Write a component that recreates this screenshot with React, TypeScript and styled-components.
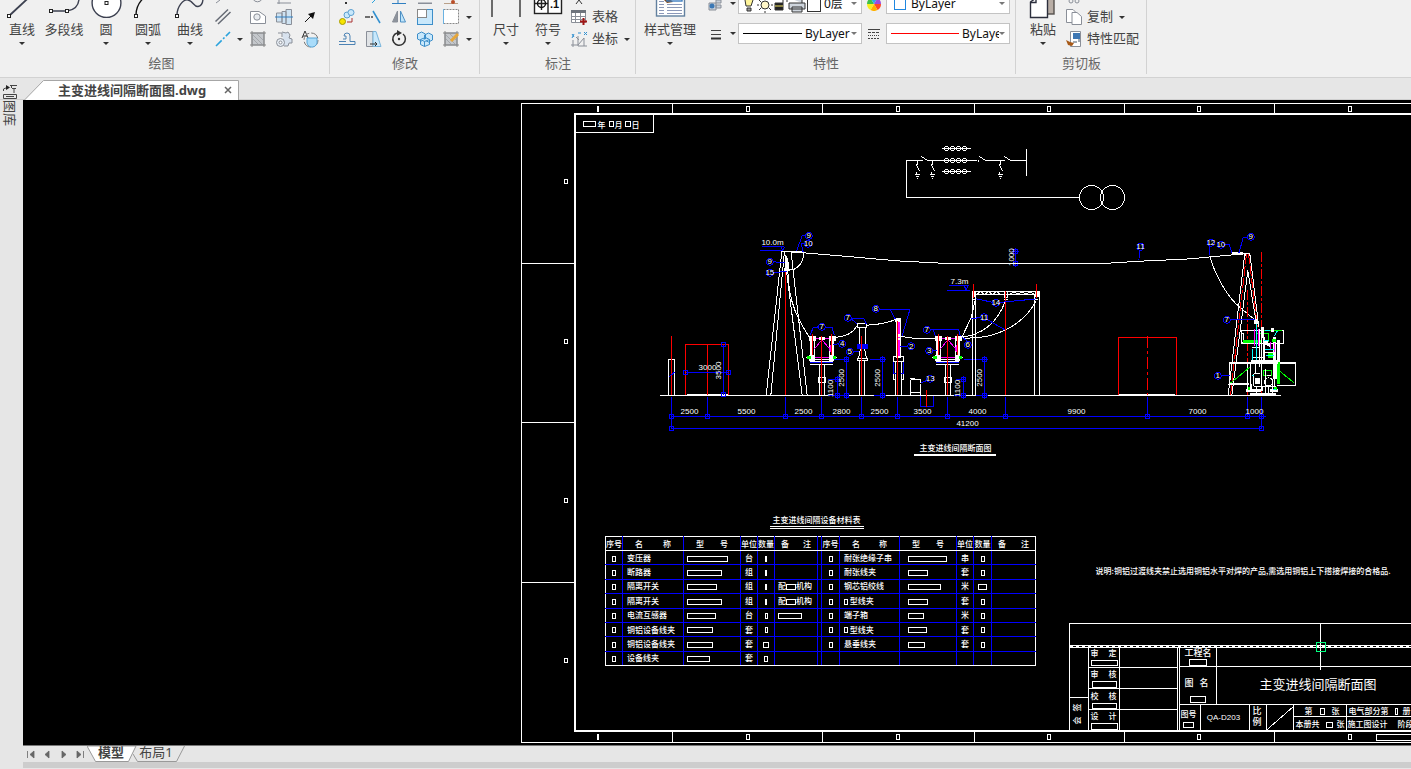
import React from 'react';
import styled, { createGlobalStyle, css } from 'styled-components';

const GlobalStyle = createGlobalStyle`
  * { box-sizing: border-box; }
  html, body { margin: 0; padding: 0; }
  body {
    background: #e6e6e6;
    font-family: "Noto Sans", "Noto Sans CJK SC", sans-serif;
    font-size: 13px;
    color: #444;
    overflow: hidden;
  }
  button, select { font: inherit; color: inherit; }
`;

/* ---------- shell ---------- */

const Shell = styled.div`
  display: flex;
  flex-direction: column;
  height: 100vh;
`;

const Ribbon = styled.header`
  display: flex;
  flex: none;
  height: 78px;
  overflow: hidden;
  background: #f0f0f0;
  border-bottom: 1px solid #d2d2d2;
`;

const Group = styled.section<{ $w: number }>`
  position: relative;
  display: flex;
  flex: none;
  flex-direction: column;
  width: ${(p) => p.$w}px;
  &::after {
    content: '';
    position: absolute;
    top: 0;
    right: 0;
    width: 1px;
    height: 74px;
    background: #d2d2d2;
  }
`;

const GroupBody = styled.div<{ $pad: number }>`
  display: flex;
  align-items: flex-end;
  height: 50px;
  padding-left: ${(p) => p.$pad}px;
`;

const GroupTitle = styled.h2<{ $inset?: number }>`
  margin: 0;
  padding-right: ${(p) => p.$inset ?? 0}px;
  font-size: 13px;
  font-weight: 400;
  line-height: 27px;
  text-align: center;
  color: #666;
`;

const BigButton = styled.button<{ $w?: number }>`
  display: flex;
  flex: none;
  flex-direction: column;
  align-items: center;
  width: ${(p) => p.$w ?? 42}px;
  height: 62px;
  padding: 0;
  border: 0;
  background: none;
  line-height: 18px;
  white-space: nowrap;
  svg { flex: none; display: block; }
`;

const Caret = styled.span<{ $soft?: boolean }>`
  display: block;
  flex: none;
  width: 0;
  height: 0;
  border: 3px solid transparent;
  border-bottom: 0;
  border-top-color: ${(p) => (p.$soft ? '#777' : '#333')};
`;

const BigCaret = styled(Caret)`
  margin-top: 4px;
`;

const IconGrid = styled.div<{ $cols: string }>`
  display: grid;
  grid-template-columns: ${(p) => p.$cols};
  grid-auto-rows: 22px;
`;

const IconButton = styled.button`
  display: flex;
  align-items: center;
  justify-content: center;
  padding: 0;
  border: 0;
  background: none;
  svg { flex: none; }
`;

const CommandList = styled.div`
  display: flex;
  flex-direction: column;
`;

const Command = styled.button`
  display: flex;
  align-items: center;
  gap: 3px;
  height: 22px;
  padding: 0;
  border: 0;
  background: none;
  line-height: 18px;
  white-space: nowrap;
  svg { flex: none; width: 20px; }
  ${Caret} { margin-left: 3px; }
`;

const CommandLabel = styled.span`
  padding-bottom: 3px;
`;

const PropertyGrid = styled.div`
  display: grid;
  grid-template-columns: 24px 10px 124px 24px 124px;
  grid-auto-rows: 21px;
  row-gap: 9px;
  align-items: center;
  padding-bottom: 6px;
  margin-left: 4px;
`;

const Combo = styled.label`
  display: flex;
  align-items: center;
  height: 21px;
  padding: 0 4px;
  border: 1px solid #c3c3c3;
  background: #fff;
  svg { flex: none; }
`;

const ComboSelect = styled.select`
  flex: 1;
  min-width: 0;
  margin: 0 0 0 3px;
  padding: 0;
  border: 0;
  outline: 0;
  background: none;
  appearance: none;
  color: #111;
  font-size: 12px;
`;

/* ---------- document tabs ---------- */

const DocBar = styled.nav`
  display: flex;
  flex: none;
  align-items: flex-end;
  height: 22px;
  padding-left: 24px;
  border-bottom: 1px solid #cfcfcf;
  background: #e6e6e6;
`;

const DocTab = styled.div`
  display: flex;
  align-items: center;
  position: relative;
  z-index: 1;
  width: 215px;
  height: 20px;
  margin-bottom: -1px;
  padding-left: 34px;
  gap: 12px;
  & > svg { position: absolute; inset: 0; z-index: -1; }
`;

const DocName = styled.span`
  font-size: 13px;
  font-weight: 700;
  line-height: 18px;
  white-space: nowrap;
  width: 154px;
`;

const CloseButton = styled.button`
  display: flex;
  padding: 0;
  border: 0;
  background: none;
`;

/* ---------- workspace ---------- */

const Workspace = styled.div`
  display: flex;
  flex: 1;
  min-height: 0;
`;

const Sidebar = styled.aside`
  flex: none;
  width: 23px;
  background: #e6e6e6;
`;

const SideButton = styled.button`
  display: flex;
  flex-direction: column;
  align-items: center;
  width: 20px;
  margin-top: -16px;
  padding: 0;
  border: 0;
  background: none;
  line-height: 14px;
  span { writing-mode: vertical-rl; text-orientation: sideways; }
`;

const Main = styled.main`
  display: flex;
  flex: 1;
  flex-direction: column;
  min-width: 0;
`;

const Canvas = styled.div`
  position: relative;
  flex: 1;
  min-height: 0;
  overflow: hidden;
  background: #000;
`;

const Sheet = styled.svg`
  display: block;
  width: 100%;
  height: 100%;
  shape-rendering: crispEdges;
  fill: none;
  stroke: #fff;
  path, rect, circle { vector-effect: non-scaling-stroke; }
`;

const cadText = css`
  font-family: "Noto Sans CJK SC", sans-serif;
  font-weight: 500;
`;

const Han = styled.text<{ $size?: number; $light?: boolean }>`
  ${cadText}
  font-size: ${(p) => p.$size ?? 8}px;
  font-weight: ${(p) => (p.$light ? 400 : 500)};
  dominant-baseline: central;
  fill: #fff;
  stroke: none;
`;

const Num = styled.text<{ $size?: number }>`
  font-family: "Liberation Sans", sans-serif;
  font-size: ${(p) => p.$size ?? 8}px;
  dominant-baseline: central;
  text-anchor: middle;
  fill: #fff;
  stroke: none;
`;

const Schedule = styled.table`
  position: absolute;
  left: 582px;
  top: 414px;
  width: 430px;
  height: 130px;
  table-layout: fixed;
  border-collapse: collapse;
  color: #fff;
  ${cadText}
  font-size: 8px;
  line-height: 12px;
`;

const ScheduleTitle = styled.caption`
  height: 22px;
  padding-right: 8px;
  span {
    display: inline-block;
    padding: 0 3px;
    border-bottom: 3px double #fff;
    line-height: 12px;
  }
`;

const Cell = styled.td<{ $align?: string; $pad?: number }>`
  height: 14px;
  padding: 0 0 0 ${(p) => p.$pad ?? 0}px;
  border: 1px solid #00f;
  text-align: ${(p) => p.$align ?? 'center'};
  white-space: nowrap;
  vertical-align: middle;
  &:first-child { border-left-color: #fff; }
  &:last-child { border-right-color: #fff; }
  tbody tr:last-child & { border-bottom-color: #fff; }
`;

const HeadCell = styled(Cell).attrs({ as: 'th' })`
  border-top-color: #fff;
  border-bottom-color: #fff;
  font-weight: 500;
`;

const Gap = styled.i<{ $w: number }>`
  display: inline-block;
  width: ${(p) => p.$w}px;
  height: 6px;
  border: 1px solid #fff;
  vertical-align: middle;
`;

const Spread = styled.span<{ $pad: number }>`
  display: flex;
  justify-content: space-between;
  padding: 0 ${(p) => p.$pad}px;
`;

/* ---------- layout tabs ---------- */

const LayoutBar = styled.nav`
  display: flex;
  flex: none;
  height: 17px;
  border-top: 1px solid #777;
`;

const NavButton = styled.button`
  display: flex;
  align-items: center;
  justify-content: center;
  width: 16px;
  padding: 0;
  border: 0;
  background: none;
`;

const LayoutTab = styled.button<{ $active?: boolean }>`
  position: relative;
  z-index: ${(p) => (p.$active ? 2 : 1)};
  width: ${(p) => (p.$active ? 50 : 52)}px;
  margin-left: ${(p) => (p.$active ? 0 : -4)}px;
  padding: 0 ${(p) => (p.$active ? 2 : 6)}px 4px 0;
  border: 0;
  background: none;
  font-weight: ${(p) => (p.$active ? 700 : 400)};
  line-height: 12px;
  svg { position: absolute; left: 0; top: 0; z-index: -1; }
`;

const ScrollStrip = styled.div`
  flex: none;
  height: 6px;
  margin-bottom: 1px;
  background: #cdcdcd;
`;

/* ---------- ribbon icons ---------- */

const Large = ({ children }: { children: React.ReactNode }) => (
  <svg width="40" height="32" viewBox="0 0 40 32" fill="none" stroke="#3c4050" strokeWidth="1.4">{children}</svg>
);
const Small = ({ children }: { children?: React.ReactNode }) => (
  <svg width="18" height="18" viewBox="0 0 18 18" fill="none" stroke="#8a8f98">{children}</svg>
);
const Node = ({ x, y }: { x: number; y: number }) => (
  <rect x={x - 1.5} y={y - 1.5} width="3" height="3" fill="#fff" stroke="#222" strokeWidth="1" />
);

const bigDraw = [
  { label: '直线', caret: true, icon: <><path d="M8 27L36 1" strokeWidth="1.8" /><Node x={7} y={28} /></> },
  { label: '多段线', caret: false, icon: <><path d="M7 23H23C30 22 35 18 35 10V2" /><Node x={7} y={23} /><Node x={23} y={23} /></> },
  { label: '圆', caret: true, icon: <><circle cx="20.5" cy="15" r="14.4" fill="#fff" /><Node x={20.5} y={15} /></> },
  { label: '圆弧', caret: true, icon: <><path d="M8 27C8 16 16 6 30 2" stroke="#111" /><Node x={8} y={28} /></> },
  { label: '曲线', caret: true, icon: <><path d="M7 27C7 19 13 11 18 12S24 19 28 18.5S33 15 33 10" /><Node x={7} y={28} /></> },
];

const Hatch = () => (
  <>
    <rect x="3" y="3" width="12" height="12" fill="#c4c7cb" />
    <path d="M3 1V17M15 1V17M1 3H17M1 15H17" stroke="#888" />
    <path d="M4 9l5 5M4 5l9 9M8 4l6 6" stroke="#a4a7ab" />
  </>
);

const drawIcons: Record<string, React.ReactNode> = {
  top1: <path d="M2 17l4-3" />,
  top2: <path d="M4 13a5 5 0 0 0 9 0" />,
  top3: <path d="M2 17h14M4 13v5" />,
  parallel: <path d="M1.5 13.5L14 1.5M4 16L16.5 4" stroke="#666b75" strokeWidth="1.5" />,
  region: <><path d="M1.5 3.5H10L16.5 8V15.5H1.5Z" fill="#fff" /><circle cx="8" cy="9" r="3.2" fill="#e8ebef" /></>,
  shaft: <><path d="M1.5 5H7V14H1.5ZM7 3.5H11V15.5H7ZM11 1.5H16.5V16.5H11Z" fill="#cfe3f2" /><path d="M0 9H18" stroke="#2f7fc1" /></>,
  leader: <><path d="M4 14L13 5" stroke="#111" /><path d="M14 4L12 11L7 6Z" fill="#111" stroke="none" /></>,
  xline: <path d="M2 16L16 2" stroke="#2ba3dd" strokeWidth="1.6" strokeDasharray="8 2 2 2" />,
  hatch: <Hatch />,
  gear: <><path d="M7 2l4 1 2-1 2 3-1 3 3 1v4l-3 0-1 3H9" fill="#d8e2ee" /><circle cx="5.5" cy="12.5" r="4" fill="#e8eef5" /><circle cx="5.5" cy="12.5" r="1.5" fill="#fff" /><path d="M3 3h4v4" /></>,
  symbol: <><path d="M1 8L4 1L7 8M2 6h4" stroke="#333" /><circle cx="10" cy="10" r="7" stroke="#777" strokeDasharray="9 2" /><path d="M6 8H16V11A5 5 0 0 1 6 13Z" fill="#a9dcfa" stroke="#5ba6d6" /></>,
};

const modifyIcons: Record<string, React.ReactNode> = {
  m1: <path d="M8 16v2" stroke="#333" strokeWidth="2" />,
  m2: <path d="M8 17l3-3" stroke="#2ba3dd" />,
  m3: <path d="M2 17.5H16M8 12v6" stroke="#2f7fc1" />,
  m4: <path d="M2 17.5H16" strokeWidth="2" />,
  m5: <><path d="M2 17.5H16" stroke="#b9a088" /><circle cx="11" cy="16" r="2" fill="#b94d28" stroke="none" /></>,
  copy: <><circle cx="4.5" cy="13.5" r="3" fill="#f7e400" stroke="#a79c00" /><circle cx="9" cy="7" r="3" fill="#c9e8fb" stroke="#5b9fd0" /><circle cx="13" cy="4.5" r="3" fill="#c9e8fb" stroke="#5b9fd0" /><path d="M9 14h5V10" stroke="#a33" /></>,
  trim: <><path d="M1 9H9" stroke="#444" strokeWidth="1.5" strokeDasharray="5 1" /><path d="M9 3L16 15" stroke="#2f8fd0" strokeWidth="1.5" /></>,
  mirror: <><path d="M7.5 3V14H2.5Z" fill="#8d939c" /><path d="M10.5 3V14H15.5Z" fill="#bfe4fa" stroke="#4d90c4" /></>,
  scale: <><rect x="1.5" y="1.5" width="15" height="15" fill="#c9e8fb" stroke="#3d8ec9" /><rect x="1.5" y="1.5" width="9" height="8" fill="#fff" stroke="#888" /></>,
  marquee: <><rect x="1.5" y="1.5" width="15" height="14" fill="#fff" stroke="#888" strokeDasharray="2 1" /><path d="M1.5 1V16" stroke="#6ab2e2" /></>,
  offset: <path d="M1 14.5H17V11.500H12V6A3 3 0 0 0 6 6H8V9H5M1 11.5H8" stroke="#4d83b4" />,
  stretch: <><path d="M2.5 1.5H9V16.5H2.5Z" fill="#e0e3e6" /><path d="M9 1.5H12L17 16.5H9Z" fill="#c9e8fb" stroke="#79b5dc" /><path d="M6 14h7M11 12l2 2-2 2" stroke="#333" /></>,
  rotate: <><path d="M13 4A6.3 6.3 0 1 1 7 3" stroke="#333" strokeWidth="1.5" /><path d="M7 0l5 3-5 3z" fill="#333" stroke="none" /><circle cx="9" cy="9" r="1.2" fill="#333" stroke="none" /></>,
  array: <g fill="#c9e8fb" stroke="#3d8ec9"><path d="M1.500 4l4-2 4 2v5l-4 2-4-2zM8.500 5l4-2 4 2v5l-4 2-4-2zM4.500 9.500l5-2 4 2v5l-5 2-4-2z" /><path d="M4.500 9.500l4 2 5-2M8.500 11.500v5" /></g>,
  hatchEdit: <><Hatch /><path d="M9 11L16 4" stroke="#e6a63a" strokeWidth="3" /></>,
};

const WeightIcon = () => (
  <Small><path d="M4 5.5H14M4 9.5H14" stroke="#444" /><path d="M4 13.5H14" stroke="#333" strokeWidth="2" /></Small>
);

/* ---------- drawing ---------- */

// Elevation geometry is kept in a 3x grid whose origin is sheet point (740, 220).
const ox = (u: number) => 740 + u / 3;
const oy = (u: number) => 220 + u / 3;

const Grip = ({ x, y }: { x: number; y: number }) => (
  <path d={`M${x - 6} ${y - 6}h12v12h-12zM${x - 10} ${y}h20M${x} ${y - 10}v20`} stroke="#00f" />
);

const bubbles: [number, number, string][] = [
  [205, 46, '9'], [203, 70, '10'], [88, 124, '9'], [88, 157, '15'], [244, 319, '7'], [322, 292, '7'],
  [406, 265, '8'], [559, 328, '7'], [305, 370, '4'], [328, 394, '5'], [512, 377, '2'], [566, 391, '3'],
  [682, 373, '6'], [766, 247, '14'], [731, 290, '11'], [569, 475, '13'], [1200, 79, '11'], [1411, 67, '12'],
  [1441, 73, '10'], [1531, 49, '9'], [1459, 298, '7'], [1432, 466, '1'],
];

const gripX = [-206, -98, 136, 244, 364, 472, 622, 796, 1222, 1522, 1564];

const spans: [number, string][] = [
  [689, '2500'], [746, '5500'], [803, '2500'], [841, '2800'], [879, '2500'],
  [922, '3500'], [977, '4000'], [1076, '9900'], [1197, '7000'], [1254, '1000'],
];

const uprights: [number, number, string][] = [
  [271, 504, '1100'], [302, 472, '2500'], [412, 472, '2500'], [652, 504, '1100'], [718, 472, '2500'], [812, 110, '1000'], [-66, 450, '3500'],
];

const Disconnector = ({ x }: { x: number }) => (
  <g transform={`translate(${x},0)`}>
    <path d="M-33 362V412M-30 362V412M-22 362V412M24 362V412M31 362V412M35 362V412" />
    <path d="M-27 362V410M27 375V395M-20 355H22M-20 410H22M-22 385L0 358L28 390M24 380V393" stroke="#f0f" />
    <path d="M-38 348H-18V360H-38ZM22 348H42V360H22ZM-36 404H-22V420H-36ZM24 404H36V420H24Z" fill="#fff" />
    <path d="M-6 352H8V358H-6ZM-46 411H-30M30 411H46" fill="#fff" />
    <path d="M-42 407H-34V415H-42ZM34 407H42V415H34Z" fill="#0f0" stroke="#0f0" />
    <path d="M-34 417H34M-34 422H34M-34 431H34M-6 432V525M7 432V525M-9 472H10V485H-9Z" />
    <path d="M-34 427H34" stroke="#00f" />
    <path d="M0 348V525M-27 340V404M30 340V404" stroke="#f00" />
  </g>
);

const Elevation = () => (
  <g transform="translate(740,220) scale(0.33333)">
    {/* ground line and fire walls */}
    <path d="M-243 526H1623M-216 417H-199V525M-216 417V525M-162 522H-36M1137 522H1305M1137 524H1305" />
    <path d="M-206 348V525M-164 525V373H-35V525M-98 373V525M1135 525V352H1307V525" stroke="#f00" />
    <path d="M1222 348V525" stroke="#f00" strokeDasharray="12 3 3 3" />

    {/* dimension chains */}
    <path d="M-206 589H1576M-206 625H1564M-215 470L-198 455M-164 457H-35M-50 373V523" stroke="#00f" />
    {gripX.map((x) => <path key={x} d={`M${x} 531V589`} stroke="#00f" />)}
    <path d="M-206 589V625M1564 589V625" stroke="#00f" />
    <g stroke="#00f">
      {gripX.map((x) => <path key={x} d={`M${x - 6} 583h12v12h-12z`} />)}
      <path d="M-212 619h12v12h-12zM1558 619h12v12h-12zM-170 451h12v12h-12zM-41 451h12v12h-12zM-56 367h12v12h-12zM-56 517h12v12h-12z" />
      <path d="M290 478V525M317 418V525M427 418V525M668 478V525M733 418V525M826 94V130M280 418H325M388 418H430M670 418H740M264 478H295M646 478H672M264 525H325M402 525H433M642 525H672M708 525H740" />
    </g>
    {[[290, 478], [290, 525], [317, 418], [317, 525], [427, 418], [427, 525], [668, 478], [668, 525], [733, 418], [733, 525], [826, 94], [826, 130]].map(([x, y]) => (
      <Grip key={`${x}-${y}`} x={x} y={y} />
    ))}

    {/* left gantry */}
    <path d="M124 92L77 525M132 92L91 525M138 150L185 525M152 95L200 525M122 92H170M155 95H190" />
    <path d="M136 104L133 150H146L142 120Z M160 92H188V97H160Z" fill="#fff" />
    <path d="M136 155V525" stroke="#f00" />

    {/* conductors */}
    <path d="M170 94L190 97L300 106L470 121L600 128L700 130H1030L1128 127L1180 123L1350 115L1410 109L1500 101" />
    <path d="M190 97Q188 135 158 148H142M142 152C144 250 175 300 205 348M282 350Q330 350 350 315M378 314Q430 312 466 297M480 346Q520 358 590 353M660 350C720 345 770 310 796 238M660 352C770 360 850 310 888 240M665 348L692 292L704 240" />
    <path d="M1408 109C1425 165 1460 230 1500 262L1542 297" />

    <Disconnector x={244} />
    <Disconnector x={622} />

    {/* circuit breaker */}
    <path d="M350 310H378V320H350ZM358 320V372M374 320V372M360 384L354 415M372 384L378 415M352 415H380V419H352ZM358 419V525M371 419V525" />
    <path d="M352 373H380V383H352Z" fill="#00f" stroke="#00f" />
    <path d="M364 348V525" stroke="#f00" />

    {/* current transformer */}
    <path d="M467 302H479V410H467Z" fill="#f0f" stroke="#fff" />
    <path d="M465 294H480V302H465ZM467 343H480V347H467ZM467 354H480V358H467Z" fill="#fff" />
    <path d="M460 408H488V424H460ZM466 424V525M482 424V525M460 458V478H466M488 458V478H482" />
    <path d="M460 426V458H466M488 426V458H482" stroke="#00f" />
    <path d="M472 302V525" stroke="#f00" />

    {/* terminal box and cable pit */}
    <path d="M511 478V525M511 478H543M539 480V488M541 492V525M511 517H541M508 475H525" />
    <path d="M541 526V559H578V526" stroke="#00f" />
    <path d="M559 510V560" stroke="#f00" />

    {/* busbar gantry */}
    <path d="M695 212V525M706 225V525M883 225V525M898 212V525M695 212H898M706 223H883M708 221l12-7 12 7 12-7 12 7 12-7 12 7M808 221l12-7 12 7 12-7 12 7 12-7 12 7" />
    <path d="M697 212H706V228H697ZM884 212H897V228H884Z" fill="#fff" />
    <path d="M791 213V230H802V213M796 230V240M790 238H802M698 236H708M884 236H894" />
    <path d="M700 192V232M889 192V232M796 213V525" stroke="#f00" />

    {/* line-side gantry */}
    <path d="M1518 100L1470 525M1524 100L1551 320" stroke="#f00" strokeDasharray="10 2" />
    <path d="M1522 210V525M1564 96V525" stroke="#f00" strokeDasharray="10 2 3 2" />
    <path d="M1476 98H1528M1498 95H1508M1513 98L1463 525M1528 98L1555 320M1522 150L1474 525M1522 150L1546 300M1515 98V108M1527 98V108" />
    <path d="M1477 97H1507V101H1477Z" fill="#fff" />

    {/* transformer */}
    <path d="M1503 331H1628V368H1503ZM1501 340H1508V365H1501M1468 425H1664V428H1468ZM1464 492H1526M1468 425V489H1525M1664 425V494H1610M1520 430V505M1530 430V505" />
    <path d="M1510 361H1562V365H1510Z M1612 425H1617V488H1612Z" fill="#0f0" stroke="#0f0" />
    <path d="M1470 488L1528 440M1615 450L1662 488M1568 331H1625M1550 338H1584V365M1568 450H1594V464H1568Z" stroke="#0f0" />
    <path d="M1543 298H1550V310H1543ZM1562 322H1568V350H1562ZM1557 325V440M1568 345V420M1574 372H1588V380M1534 382H1560M1534 410H1570M1537 385V420M1562 350V512M1572 350V420M1600 350H1606V425H1600ZM1612 360H1616V422H1612Z" fill="#fff" />
    <path d="M1534 420H1612V430H1534ZM1598 430H1608V475H1598ZM1540 460H1560M1540 462V498M1545 474H1556V488H1545ZM1575 447V500M1545 432V460M1580 464H1592M1540 499H1606M1518 507H1560V512H1518ZM1566 500V512M1590 507H1612V512H1590ZM1530 518H1606V525H1530ZM1548 500V518M1575 500V518M1583 500V518M1596 475V518" fill="#fff" />
    <path d="M1570 322H1566V330M1593 324H1598V332H1593ZM1534 492V516M1602 476V516M1596 358H1606M1570 395H1606M1572 362H1580V370H1572Z" fill="#fff" />
    <path d="M1583 398H1595V412H1583ZM1596 358H1606V364H1596ZM1524 500H1528V508H1524ZM1602 500H1608V506H1602Z" fill="#0f0" stroke="#0f0" />
    <path d="M1547 310V420M1535 385V420M1575 331H1590M1602 345L1610 332M1574 388H1602M1578 404H1600M1534 464H1540M1597 507H1606M1572 360H1586" stroke="#0ff" />
    <path d="M1541 326V378M1553 326V378M1602 368V395M1591 365V385" stroke="#f0f" />
    <circle cx="1584" cy="484" r="12" />

    {/* level marks and leaders */}
    <path d="M60 91H125M66 79H132M122 79L127 90L132 79M620 211H690M626 196H686M672 197L677 210L682 197" stroke="#00f" />
    <path
      stroke="#00f"
      d="M195 46H185L168 92M193 70H182L188 95M98 124L134 126M98 157L138 152M234 319L218 322L208 345M254 319L275 322L282 345M332 295L350 310M332 295H370L377 310M416 268H508L485 345M450 268L465 297M569 328H655L660 348M578 328L585 348M295 370L278 372M338 394H355M502 377H480M576 391H590M682 363L665 350M755 245L706 235M776 246L888 235M721 290L690 296M740 297L793 328M558 480L541 488M1198 89L1195 120M1408 77V105M1451 73H1466L1475 98M1521 52H1508L1495 98M1469 298H1545M1442 466H1468"
    />
    {bubbles.map(([x, y], i) => <circle key={i} cx={x} cy={y} r="10" stroke="#00f" />)}
  </g>
);

const ElevationText = () => (
  <g>
    {bubbles.map(([x, y, t], i) => <Num key={i} x={ox(x)} y={oy(y)}>{t}</Num>)}
    {spans.map(([x, t]) => <Num key={x} x={x} y={411}>{t}</Num>)}
    <Num x="967" y="423">41200</Num>
    <Num x="772" y="242">10.0m</Num>
    <Num x="959" y="281">7.3m</Num>
    <Num x="707" y="367">3000</Num>
    {uprights.map(([x, y, t], i) => (
      <Num key={i} transform={`translate(${ox(x)},${oy(y)}) rotate(-90)`}>{t}</Num>
    ))}
    <Han x="955" y="447" textAnchor="middle">主变进线间隔断面图</Han>
    <path d="M913 454H995" strokeWidth="2" />
    <Han x="1095" y="570">说明:铜铝过渡线夹禁止选用铜铝水平对焊的产品,需选用铜铝上下搭接焊接的合格品.</Han>
  </g>
);

const EarthSwitch = ({ x }: { x: number }) => (
  <path d={`M${x} 160V164M${x - 1} 164L${x + 2} 171M${x - 1} 171V174M${x - 3} 174H${x + 2}M${x - 2} 176H${x + 1}M${x - 1} 178H${x}`} />
);

const SingleLine = () => (
  <g>
    <path d="M1079 197H906V160H922M921 156L927 160H976M978 159V161M979 156L985 160H1004M1004 156L1010 160H1026M1026 148V175" />
    {[148, 160, 171].map((y) => (
      <g key={y}>
        <path d={`M941 ${y}H970`} />
        {[946, 952, 958, 964].map((x) => <circle key={x} cx={x} cy={y} r="2" />)}
      </g>
    ))}
    {[917, 932, 1000].map((x) => <EarthSwitch key={x} x={x} />)}
    <circle cx="1091" cy="197" r="12" />
    <circle cx="1112" cy="197" r="12" />
  </g>
);

const Frame = () => (
  <g>
    <path d="M2600 103H521V742H2600" />
    <path d="M2600 113.500H574.500V730.500H2600" strokeWidth="2" />
    {[672, 822, 974, 1124, 1274].map((x) => <path key={x} d={`M${x} 103V114M${x} 731V742`} />)}
    {[263, 422, 582].map((y) => <path key={y} d={`M521 ${y}H575`} />)}
    {[597, 748, 898, 1049, 1199, 1350].map((x, i) => (
      <g key={x}>
        <rect x={x - (i ? 2 : 0)} y="106" width={i ? 3 : 1} height="5" />
        <rect x={x - (i ? 2 : 0)} y="734" width={i ? 3 : 1} height="5" />
      </g>
    ))}
    {[181, 341, 500, 660].map((y) => <rect key={y} x="564" y={y - 2} width="3" height="4" />)}
    <rect x="1376" y="734" width="60" height="6" />
    <path d="M575 132H653V114" />
    <rect x="583" y="121" width="12" height="5" />
    <rect x="609" y="121" width="4" height="5" />
    <rect x="625" y="121" width="5" height="5" />
    <Han x="597" y="124">年</Han>
    <Han x="614" y="124">月</Han>
    <Han x="631" y="124">日</Han>
  </g>
);

const stamps: [number, number, string, number?][] = [
  [1090, 652, '审'], [1108, 652, '定'], [1090, 673, '审'], [1108, 673, '核'],
  [1090, 695, '校'], [1108, 695, '核'], [1090, 715, '设'], [1108, 715, '计'],
  [1184, 652, '工程名', 9], [1184, 682, '图', 9], [1199, 682, '名', 9], [1180, 713, '图号'],
  [1252, 710, '比', 9], [1252, 721, '例', 9], [1304, 710, '第'], [1331, 710, '张'],
  [1295, 723, '本册共'], [1336, 723, '张'], [1348, 710, '电气部分第'], [1402, 710, '册'],
  [1347, 723, '施工图设计'], [1397, 723, '阶段'],
];

const TitleBlock = () => (
  <g>
    <g transform="translate(1050,555) scale(0.33333)">
      <path d="M3000 205H58V525M58 271H3000M58 277H3000M58 427H115M115 277V525M208 277V525M380 277V525M386 277V525M115 337H380M115 400H380M115 463H380M386 334H3000M499 277V448M386 448H3000M451 448V525M598 448V525M647 448V525M730 448V525M889 448V525M730 484H3000M650 522L730 452" />
      <path d="M58 274H3000" strokeDasharray="3 3" />
      <path d="M123 316H200V331H123ZM126 379H197V395H126ZM126 445H197V458H126ZM123 505H200V521H123ZM418 313H467V331H418ZM421 424H464V440H421ZM400 500H428V517H400ZM811 460H821V476H811ZM829 500H845V515H829ZM1036 460H1042V478H1036Z" />
      <path d="M811 202V345" />
      <path d="M797 260H826V289H797Z" stroke="#00ff7f" />
    </g>
    {stamps.map(([x, y, t, s], i) => <Han key={i} x={x} y={y} $size={s}>{t}</Han>)}
    <Han x="1259" y="683" $size={13} $light>主变进线间隔断面图</Han>
    <Num x="1223" y="717">QA-D203</Num>
    <Han transform="translate(1076,724) rotate(-90)">会</Han>
    <Han transform="translate(1076,711) rotate(-90)">签</Han>
  </g>
);

/* ---------- material schedule ---------- */

type Item = { name: React.ReactNode; model: number; unit: string; qty: number; note?: React.ReactNode };

const mech = <>配<Gap $w={10} />机构</>;
const left: Item[] = [
  { name: '变压器', model: 41, unit: '台', qty: 2 },
  { name: '断路器', model: 35, unit: '组', qty: 2 },
  { name: '隔离开关', model: 30, unit: '组', qty: 2, note: mech },
  { name: '隔离开关', model: 35, unit: '组', qty: 2, note: mech },
  { name: '电流互感器', model: 29, unit: '台', qty: 3, note: <Gap $w={24} /> },
  { name: '铜铝设备线夹', model: 26, unit: '套', qty: 3 },
  { name: '铜铝设备线夹', model: 26, unit: '套', qty: 6 },
  { name: '设备线夹', model: 23, unit: '套', qty: 4 },
];
const right: Item[] = [
  { name: '耐张绝缘子串', model: 39, unit: '串', qty: 4 },
  { name: '耐张线夹', model: 20, unit: '套', qty: 4 },
  { name: '钢芯铝绞线', model: 33, unit: '米', qty: 9 },
  { name: <><Gap $w={4} /> 型线夹</>, model: 20, unit: '套', qty: 4 },
  { name: '端子箱', model: 16, unit: '米', qty: 4 },
  { name: <><Gap $w={4} /> 型线夹</>, model: 19, unit: '套', qty: 4 },
  { name: '悬垂线夹', model: 17, unit: '套', qty: 4 },
];
const columns = [17, 61, 57, 17, 17, 43, 4, 18, 60, 57, 17, 18, 44];

const HeadCells = () => (
  <>
    <HeadCell>序号</HeadCell>
    <HeadCell><Spread $pad={12}><span>名</span><span>称</span></Spread></HeadCell>
    <HeadCell><Spread $pad={12}><span>型</span><span>号</span></Spread></HeadCell>
    <HeadCell>单位</HeadCell>
    <HeadCell>数量</HeadCell>
    <HeadCell><Spread $pad={6}><span>备</span><span>注</span></Spread></HeadCell>
  </>
);

const ItemCells = ({ item, pad }: { item?: Item; pad: number }) =>
  item ? (
    <>
      <Cell><Gap $w={4} /></Cell>
      <Cell $align="left" $pad={4}>{item.name}</Cell>
      <Cell $align="left" $pad={pad}><Gap $w={item.model} /></Cell>
      <Cell>{item.unit}</Cell>
      <Cell><Gap $w={item.qty} /></Cell>
      <Cell $align="left" $pad={3}>{item.note}</Cell>
    </>
  ) : (
    <>{[0, 1, 2, 3, 4, 5].map((k) => <Cell key={k} />)}</>
  );

const MaterialSchedule = () => (
  <Schedule>
    <ScheduleTitle><span>主变进线间隔设备材料表</span></ScheduleTitle>
    <colgroup>{columns.map((w, i) => <col key={i} width={w} />)}</colgroup>
    <thead><tr><HeadCells /><HeadCell /><HeadCells /></tr></thead>
    <tbody>
      {left.map((item, i) => (
        <tr key={i}>
          <ItemCells item={item} pad={3} />
          <Cell />
          <ItemCells item={right[i]} pad={8} />
        </tr>
      ))}
    </tbody>
  </Schedule>
);

/* ---------- page ---------- */

const IconCell = ({ name, set }: { name: string; set: Record<string, React.ReactNode> }) => (
  <IconButton aria-label={name}><Small>{set[name]}</Small></IconButton>
);
const MoreButton = () => <IconButton aria-label="更多"><Caret /></IconButton>;

export default function App() {
  return (
    <Shell>
      <GlobalStyle />
      <Ribbon>
        <Group $w={330}>
          <GroupBody $pad={1}>
            {bigDraw.map((b) => (
              <BigButton key={b.label}><Large>{b.icon}</Large>{b.label}{b.caret && <BigCaret />}</BigButton>
            ))}
            <IconGrid $cols="24px 10px 26px 26px 26px">
              <IconCell name="top1" set={drawIcons} /><span /><IconCell name="top2" set={drawIcons} /><IconCell name="top3" set={drawIcons} /><span />
              <IconCell name="parallel" set={drawIcons} /><span /><IconCell name="region" set={drawIcons} /><IconCell name="shaft" set={drawIcons} /><IconCell name="leader" set={drawIcons} />
              <IconCell name="xline" set={drawIcons} /><MoreButton /><IconCell name="hatch" set={drawIcons} /><IconCell name="gear" set={drawIcons} /><IconCell name="symbol" set={drawIcons} />
            </IconGrid>
          </GroupBody>
          <GroupTitle $inset={7}>绘图</GroupTitle>
        </Group>

        <Group $w={150}>
          <GroupBody $pad={4}>
            <IconGrid $cols="26px 26px 26px 26px 26px 10px">
              {['m1', 'm2', 'm3', 'm4', 'm5'].map((n) => <IconCell key={n} name={n} set={modifyIcons} />)}<span />
              {['copy', 'trim', 'mirror', 'scale', 'marquee'].map((n) => <IconCell key={n} name={n} set={modifyIcons} />)}<MoreButton />
              {['offset', 'stretch', 'rotate', 'array', 'hatchEdit'].map((n) => <IconCell key={n} name={n} set={modifyIcons} />)}<MoreButton />
            </IconGrid>
          </GroupBody>
          <GroupTitle>修改</GroupTitle>
        </Group>

        <Group $w={156}>
          <GroupBody $pad={5}>
            <BigButton><Large><path d="M6 0V29M34 0V29" stroke="#333" /></Large>尺寸<BigCaret /></BigButton>
            <BigButton>
              <Large>
                <rect x="6.5" y="4.5" width="27" height="21" fill="#fff" stroke="#222" />
                <path d="M20 4V25M6 15.5H20M13.5 9V22" stroke="#222" />
                <circle cx="13.5" cy="15.5" r="4" stroke="#111" />
                <text x="22" y="20" fill="#111" stroke="none" fontSize="11" fontWeight="700" fontFamily="Liberation Sans">.1</text>
              </Large>
              符号<BigCaret />
            </BigButton>
            <CommandList>
              <Command aria-label="文字"><Small><path d="M6 18L9 14L12 18" stroke="#333" /></Small></Command>
              <Command>
                <Small><path d="M1.5 2.5H15.5V14.5H1.5ZM1.5 8.5H15.5M1.5 11.5H15.5M5.5 5V14M10.5 5V14" fill="#fff" /><path d="M1 3.5H16" stroke="#6d737c" strokeWidth="3" /><path d="M13.5 10V17M10 13.5H17" stroke="#a01515" strokeWidth="2" /></Small>
                <CommandLabel>表格</CommandLabel>
              </Command>
              <Command>
                <Small><path d="M3 10V17M1 15H8L14 8M8 6V16H17M6 7l3 3M14 8v8" /><path d="M2 4l2 3M4 4L2 8M8 3h3M14 2l3 3M17 2l-3 3" stroke="#2f8fd0" /></Small>
                <CommandLabel>坐标</CommandLabel><Caret />
              </Command>
            </CommandList>
          </GroupBody>
          <GroupTitle>标注</GroupTitle>
        </Group>

        <Group $w={380}>
          <GroupBody $pad={4}>
            <BigButton $w={60}>
              <Large>
                <rect x="6.5" y="-4" width="28" height="32" fill="#fff" stroke="#62809f" />
                <path d="M9 13.5H14M9 16.5H14M9 19.5H14M9 22.5H14M9 25.5H14M17 16.5H32M17 19.5H32M17 22.5H32M17 25.5H32" stroke="#8b98b8" strokeWidth="1" />
                <path d="M14 12L20 11L23 14L17 15Z" fill="#7c4b22" stroke="none" />
                <rect x="17" y="6" width="15" height="7" stroke="#3c7dc0" />
              </Large>
              样式管理<BigCaret />
            </BigButton>
            <PropertyGrid>
              <IconButton aria-label="图层"><Small><path d="M2 8H9V15H2ZM9 5H14V8H9ZM9 10H14V13H9Z" fill="#c9d2dc" /><circle cx="5" cy="11" r="2.5" fill="#3b78b5" stroke="none" /></Small></IconButton>
              <MoreButton />
              <Combo>
                <svg width="78" height="18" viewBox="0 0 78 18" fill="none" stroke="#333">
                  <path d="M3 11L2 5A4 4 0 0 1 10 5L8 11Z" fill="#fff59a" /><path d="M4 13H8V16H4Z" fill="#999" />
                  <circle cx="22" cy="10" r="4" fill="#fff7c8" /><path d="M22 2v2M22 16v2M14 10h2M28 10h2M16 5l2 2M26 13l2 2M16 15l2-2" />
                  <path d="M32 8H40V15H32Z" fill="#222" /><path d="M32 11H40" stroke="#f5e663" /><path d="M40 8V4h4v3" />
                  <path d="M46 8H62V14H46ZM49 4H59V8M49 12H59V17H49Z" fill="#cfd6de" />
                  <rect x="64.5" y="2.5" width="13" height="14" fill="#fff" />
                </svg>
                <ComboSelect aria-label="图层"><option>0层</option></ComboSelect>
                <Caret $soft />
              </Combo>
              <IconButton aria-label="颜色">
                <svg width="14" height="14" viewBox="0 0 14 14">
                  {['#ff4a26', '#ffb100', '#f7ee1d', '#3fc04a', '#2fa8e8', '#9a4be0'].map((c, i) => {
                    const p = (k: number) => `${7 + 7 * Math.cos((k * Math.PI) / 3)} ${7 + 7 * Math.sin((k * Math.PI) / 3)}`;
                    return <path key={c} d={`M7 7L${p(i)}A7 7 0 0 1 ${p(i + 1)}Z`} fill={c} />;
                  })}
                </svg>
              </IconButton>
              <Combo>
                <svg width="17" height="16" viewBox="0 0 17 16"><rect x="3.5" y="1.5" width="11" height="12" fill="none" stroke="#1f87e0" /></svg>
                <ComboSelect aria-label="颜色"><option>ByLayer</option></ComboSelect>
                <Caret $soft />
              </Combo>
              <IconButton aria-label="线宽"><WeightIcon /></IconButton>
              <MoreButton />
              <Combo>
                <svg width="59" height="3"><path d="M0 1.5H59" stroke="#000" /></svg>
                <ComboSelect aria-label="线宽"><option>ByLayer</option></ComboSelect>
                <Caret $soft />
              </Combo>
              <IconButton aria-label="线型">
                <svg width="12" height="12" viewBox="0 0 12 12" stroke="#444"><path d="M0 1.5H12" /><path d="M0 4.5H12" strokeDasharray="3 1" /><path d="M0 7.5H12" strokeDasharray="1 1" /><path d="M0 10.5H12" strokeDasharray="2 1" /></svg>
              </IconButton>
              <Combo>
                <svg width="68" height="3"><path d="M0 1.5H68" stroke="#f00" /></svg>
                <ComboSelect aria-label="线型"><option>ByLayer</option></ComboSelect>
                <Caret $soft />
              </Combo>
            </PropertyGrid>
          </GroupBody>
          <GroupTitle>特性</GroupTitle>
        </Group>

        <Group $w={131}>
          <GroupBody $pad={6}>
            <BigButton>
              <Large>
                <rect x="22" y="-4" width="9" height="30" fill="#b9aea6" stroke="#55504e" />
                <path d="M7.5 14L13 10H24.5V29.5H7.5Z" fill="#fff" stroke="#2c2f3d" />
                <path d="M7.5 14.5H13V10" stroke="#2c2f3d" />
              </Large>
              粘贴<BigCaret />
            </BigButton>
            <CommandList>
              <Command aria-label="剪切"><Small><circle cx="6" cy="15" r="2" /><circle cx="12" cy="15" r="2" /></Small></Command>
              <Command>
                <Small><path d="M1.5 1.5H8L10.5 4V14.5H1.5Z" fill="#fff" /><path d="M7 4.5H12L16.5 8.5V16.5H7Z" fill="#fff" /></Small>
                <CommandLabel>复制</CommandLabel><Caret />
              </Command>
              <Command>
                <Small><path d="M5.5 1.5H15.5V16.5H5.5Z" fill="#fff" /><path d="M8 3H15V9H8Z" fill="#3e77b3" stroke="none" /><path d="M8 12h4M14 9v3" stroke="#456" /><path d="M1 10L5 12L9 13L7 16L3 15Z" fill="#a85a18" stroke="none" /></Small>
                <CommandLabel>特性匹配</CommandLabel>
              </Command>
            </CommandList>
          </GroupBody>
          <GroupTitle>剪切板</GroupTitle>
        </Group>
      </Ribbon>

      <DocBar>
        <DocTab>
          <svg width="215" height="20"><path d="M0.5 20L19.5 0.5H214.5V20" fill="#fff" stroke="#a6a6a6" /></svg>
          <DocName>主变进线间隔断面图.dwg</DocName>
          <CloseButton aria-label="关闭"><svg width="8" height="8" stroke="#666" strokeWidth="1.5"><path d="M1 1L7 7M7 1L1 7" /></svg></CloseButton>
        </DocTab>
      </DocBar>

      <Workspace>
        <Sidebar>
          <SideButton>
            <svg width="16" height="16" viewBox="0 0 16 16" fill="none" stroke="#444">
              <path d="M1.5 7V5L5 3.5M8 1.5H15M10 4.5H14M12 4V9M9.5 1.5V4" /><path d="M4 1L8 3.5L4 6Z" fill="#222" stroke="none" />
              <path d="M1.5 10.5H14.5V14.5H1.5ZM4 12.5H12" />
            </svg>
            <span>图库</span>
          </SideButton>
        </Sidebar>
        <Main>
          <Canvas>
            <Sheet role="img" aria-label="主变进线间隔断面图">
              <g transform="translate(-22.5,-99.5)">
                <Frame />
                <SingleLine />
                <Elevation />
                <ElevationText />
                <TitleBlock />
              </g>
            </Sheet>
            <MaterialSchedule />
          </Canvas>
          <LayoutBar>
            {['M1.5 2V9M8 2L4 5.5L8 9Z', 'M7 2L3 5.5L7 9Z', 'M4 2L8 5.5L4 9Z', 'M3 2L7 5.5L3 9ZM9.5 2V9'].map((d, i) => (
              <NavButton key={d} aria-label={['首个', '上一个', '下一个', '末个'][i]}>
                <svg width="11" height="11" fill="#666" stroke="#666"><path d={d} strokeWidth="0.8" /></svg>
              </NavButton>
            ))}
            <LayoutTab $active>
              <svg width="50" height="16"><path d="M0 0L8.5 15.5H41.5L49 0Z" fill="#fff" stroke="#999" /></svg>
              模型
            </LayoutTab>
            <LayoutTab>
              <svg width="54" height="16"><path d="M0 8L4.5 15.5H43.5L51.5 0" fill="none" stroke="#999" /></svg>
              布局1
            </LayoutTab>
          </LayoutBar>
          <ScrollStrip />
        </Main>
      </Workspace>
    </Shell>
  );
}
